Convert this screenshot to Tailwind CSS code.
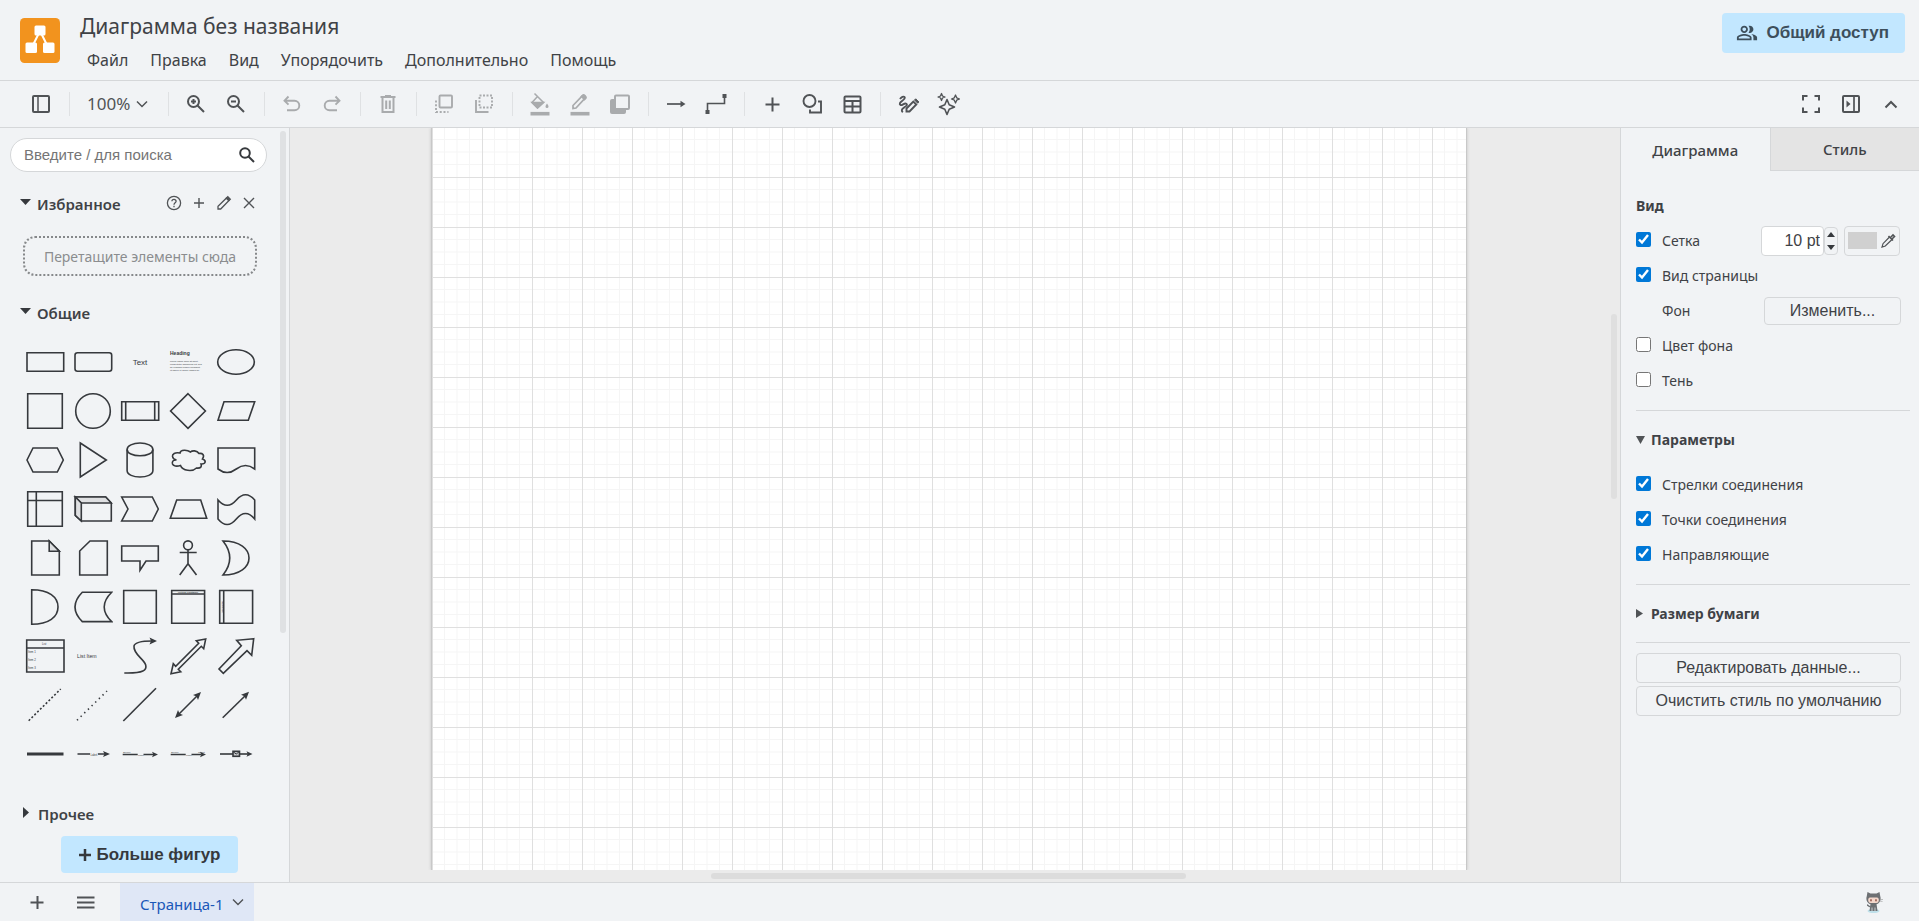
<!DOCTYPE html>
<html lang="ru">
<head>
    <meta charset="UTF-8">
    <meta name="viewport" content="width=device-width, initial-scale=1.0">
    <title>Диаграмма без названия</title>
    <script src="https://cdn.jsdelivr.net/npm/@tailwindcss/browser@4"></script>
</head>
<body class="flex flex-col h-screen overflow-hidden bg-[#f1f3f5] text-[#3f4246] font-['Noto_Sans',sans-serif]">

    <!-- Header: logo, title, menu bar -->
    <header class="flex shrink-0 h-[81px] border-b border-[#d5d7d9] pl-5 pr-[14px]">
        <svg class="w-10 h-[55px] mt-[13px] shrink-0" viewBox="0 0 40 55" aria-hidden="true">
            <rect y="5" width="40" height="45" rx="4.500" fill="#f2931e"/>
            <path d="M20 18 L11 36 M20 18 L29 36" stroke="#fff" stroke-width="2"/>
            <rect x="14.500" y="12.500" width="11" height="10" rx="1.500" fill="#fff"/>
            <rect x="5.500" y="29.500" width="11.500" height="10.500" rx="1.500" fill="#fff"/>
            <rect x="23" y="29.500" width="11.500" height="10.500" rx="1.500" fill="#fff"/>
        </svg>
        <div class="flex-1 pl-5 pt-3">
            <h1 class="text-[21px] leading-7">Диаграмма без названия</h1>
            <nav class="flex gap-[22px] pl-[7px] pt-[6px] text-[16px] leading-7">
                <button type="button">Файл</button>
                <button type="button">Правка</button>
                <button type="button">Вид</button>
                <button type="button">Упорядочить</button>
                <button type="button">Дополнительно</button>
                <button type="button">Помощь</button>
            </nav>
        </div>
        <button type="button" class="flex items-center gap-2 h-10 mt-[13px] pl-[14px] pr-4 rounded bg-[#c2e7ff] text-[#3d4f5c] font-['Liberation_Sans',sans-serif] font-bold text-[17px]">
            <svg class="w-[22px] h-[22px]" viewBox="0 0 24 24" fill="currentColor" aria-hidden="true"><path d="M16.700 13.100c1.400.9 2.300 2.200 2.300 3.900v3h4v-3c0-2.200-3.600-3.500-6.300-3.900zM15 12c2.200 0 4-1.800 4-4s-1.800-4-4-4c-.5 0-.9.1-1.300.2A6 6 0 0 1 15 8a6 6 0 0 1-1.300 3.800c.4.100.8.200 1.300.2zM9 12c2.200 0 4-1.800 4-4s-1.800-4-4-4-4 1.800-4 4 1.800 4 4 4zm0-6c1.100 0 2 .9 2 2s-.9 2-2 2-2-.9-2-2 .9-2 2-2zM9 13c-2.700 0-8 1.300-8 4v3h16v-3c0-2.700-5.300-4-8-4zm6 5H3v-1c0-.6 3-2 6-2s6 1.400 6 2v1z"/></svg>
            Общий доступ
        </button>
    </header>

    <!-- Toolbar -->
    <div class="flex shrink-0 items-center h-[47px] border-b border-[#d5d7d9] pl-[21px] pr-2 text-[#505356]">
        <button type="button" aria-label="Фигуры" class="grid place-items-center w-10 h-10">
            <svg class="w-6 h-6" viewBox="0 0 24 24" fill="none" stroke="currentColor" stroke-width="2"><rect x="4" y="4" width="16" height="16" rx="1"/><path d="M9 4v16" stroke-width="1.500"/></svg>
        </button>
        <span class="w-4 h-6 flex justify-center"><i class="w-px bg-[#dfe1e3]"></i></span>
        <button type="button" class="flex items-center gap-1 w-[83px] pl-[10px] text-[17px]">100%
            <svg class="w-4 h-4" viewBox="0 0 16 16" fill="none" stroke="currentColor" stroke-width="1.500"><path d="M3 5.500l5 5 5-5"/></svg>
        </button>
        <span class="w-4 h-6 flex justify-center"><i class="w-px bg-[#dfe1e3]"></i></span>
        <button type="button" aria-label="Увеличить" class="grid place-items-center w-10 h-10">
            <svg class="w-6 h-6" viewBox="0 0 24 24" fill="none" stroke="currentColor" stroke-width="2"><circle cx="9.500" cy="9.500" r="5.500"/><path d="M13.500 13.500l6.500 6.500M9.500 7v5M7 9.500h5"/></svg>
        </button>
        <button type="button" aria-label="Уменьшить" class="grid place-items-center w-10 h-10">
            <svg class="w-6 h-6" viewBox="0 0 24 24" fill="none" stroke="currentColor" stroke-width="2"><circle cx="9.500" cy="9.500" r="5.500"/><path d="M13.500 13.500l6.500 6.500M7 9.500h5"/></svg>
        </button>
        <span class="w-4 h-6 flex justify-center"><i class="w-px bg-[#dfe1e3]"></i></span>
        <button type="button" aria-label="Отменить" class="grid place-items-center w-10 h-10 text-[#a9abad]">
            <svg class="w-6 h-6" viewBox="0 0 24 24" fill="none" stroke="currentColor" stroke-width="1.900"><path d="M8.500 4.500L4.500 8.700l4 4M4.500 8.700h10a4.800 4.800 0 0 1 0 9.600H7"/></svg>
        </button>
        <button type="button" aria-label="Повторить" class="grid place-items-center w-10 h-10 text-[#a9abad]">
            <svg class="w-6 h-6" viewBox="0 0 24 24" fill="none" stroke="currentColor" stroke-width="1.900"><path d="M15.500 4.500l4 4.200-4 4M19.500 8.700h-10a4.800 4.800 0 0 0 0 9.600H17"/></svg>
        </button>
        <span class="w-4 h-6 flex justify-center"><i class="w-px bg-[#dfe1e3]"></i></span>
        <button type="button" aria-label="Удалить" class="grid place-items-center w-10 h-10 text-[#a9abad]">
            <svg class="w-6 h-6" viewBox="0 0 24 24" fill="none" stroke="currentColor" stroke-width="2"><path d="M4.500 5h15M9 4h6M6.500 5v15h11V5M10.200 8.500v8.500M13.800 8.500v8.500"/></svg>
        </button>
        <span class="w-4 h-6 flex justify-center"><i class="w-px bg-[#dfe1e3]"></i></span>
        <button type="button" aria-label="На передний план" class="grid place-items-center w-10 h-10 text-[#a9abad]">
            <svg class="w-6 h-6" viewBox="0 0 24 24" fill="none" stroke="currentColor" stroke-width="1.900"><rect x="7.500" y="3.500" width="12.500" height="12" rx="1"/><path d="M4 8.500v11.500h12.500" stroke-dasharray="2 1.800"/></svg>
        </button>
        <button type="button" aria-label="На задний план" class="grid place-items-center w-10 h-10 text-[#a9abad]">
            <svg class="w-6 h-6" viewBox="0 0 24 24" fill="none" stroke="currentColor" stroke-width="1.900"><rect x="7.500" y="3.500" width="12.500" height="12" stroke-dasharray="2 1.500"/><path d="M4 8v12h12.500"/></svg>
        </button>
        <span class="w-4 h-6 flex justify-center"><i class="w-px bg-[#dfe1e3]"></i></span>
        <button type="button" aria-label="Заливка" class="grid place-items-center w-10 h-10 text-[#a9abad]">
            <svg class="w-6 h-6" viewBox="0 0 24 24" fill="none" stroke="currentColor" stroke-width="1.500"><path d="M6.500 1.500l9 9-6 5.500L4 10.500l5.500-6"/><path d="M4 10.500h11.500L9.500 16z" fill="currentColor"/><path d="M19 11.500c1 1.500 1.500 2.200 1.500 3a1.500 1.500 0 0 1-3 0c0-.8.500-1.500 1.500-3z" fill="currentColor" stroke="none"/><path d="M2.500 21.700h19" stroke-width="3.600"/></svg>
        </button>
        <button type="button" aria-label="Цвет линии" class="grid place-items-center w-10 h-10 text-[#a9abad]">
            <svg class="w-6 h-6" viewBox="0 0 24 24" fill="none" stroke="currentColor" stroke-width="1.700"><path d="M5 16.500v-3l9.500-9.800c1-.9 3.500 1.400 2.600 2.500L8 16z"/><path d="M13.500 4.500l3 3 1.500-1.500c.6-.8-2-3.700-3-2.900z" fill="currentColor"/><path d="M2.500 21.700h19" stroke-width="3.600"/></svg>
        </button>
        <button type="button" aria-label="Тень" class="grid place-items-center w-10 h-10 text-[#a9abad]">
            <svg class="w-6 h-6" viewBox="0 0 24 24"><rect x="2" y="7" width="16" height="15" rx="2" fill="currentColor"/><rect x="7" y="3.500" width="14" height="13.500" rx="1" fill="#f1f3f5" stroke="currentColor" stroke-width="2"/></svg>
        </button>
        <span class="w-4 h-6 flex justify-center"><i class="w-px bg-[#dfe1e3]"></i></span>
        <button type="button" aria-label="Соединение" class="grid place-items-center w-10 h-10">
            <svg class="w-6 h-6" viewBox="0 0 24 24"><path d="M3 12h14" stroke="currentColor" stroke-width="1.700"/><path d="M16.500 8.800l5 3.200-5 3.200z" fill="currentColor"/></svg>
        </button>
        <button type="button" aria-label="Точки пути" class="grid place-items-center w-10 h-10">
            <svg class="w-6 h-6" viewBox="0 0 24 24"><path d="M3.500 20v-8.500h17V4" fill="none" stroke="currentColor" stroke-width="1.600"/><path d="M1.500 18h4v4h-4zM18.500 2h4v4h-4z" fill="currentColor"/></svg>
        </button>
        <span class="w-4 h-6 flex justify-center"><i class="w-px bg-[#dfe1e3]"></i></span>
        <button type="button" aria-label="Вставить" class="grid place-items-center w-10 h-10">
            <svg class="w-6 h-6" viewBox="0 0 24 24"><path d="M5.500 12.500h14M12.500 5.500v14" stroke="currentColor" stroke-width="2"/></svg>
        </button>
        <button type="button" aria-label="Фигура" class="grid place-items-center w-10 h-10">
            <svg class="w-6 h-6" viewBox="0 0 24 24" fill="none" stroke="currentColor" stroke-width="1.900"><circle cx="9.500" cy="9" r="6"/><path d="M18 9.500h3v11H10v-3"/></svg>
        </button>
        <button type="button" aria-label="Таблица" class="grid place-items-center w-10 h-10">
            <svg class="w-6 h-6" viewBox="0 0 24 24" fill="none" stroke="currentColor" stroke-width="2"><rect x="4.500" y="4.500" width="16" height="16" rx="1"/><path d="M4.500 9h16M4.500 14.500h16M12.500 9v11.500"/></svg>
        </button>
        <span class="w-4 h-6 flex justify-center"><i class="w-px bg-[#dfe1e3]"></i></span>
        <button type="button" aria-label="Рисование" class="grid place-items-center w-10 h-10">
            <svg class="w-6 h-6" viewBox="0 0 24 24" fill="none" stroke="currentColor" stroke-width="1.900"><path d="M4 7c1.500-2 3.500-3 4.500-2S8 7.500 6 9s-3 3-1.500 4 4-2.500 5.800-1.200-.8 2.700-2.800 4.200-2.200 2.800-.7 4.200"/><path d="M10.500 19.500v-3l6.800-7 3 3-6.800 7z"/><path d="M18.500 8l1.200-1.200 3.200 3.200-1.200 1.200z" fill="currentColor" stroke-width="1"/></svg>
        </button>
        <button type="button" aria-label="Создать" class="grid place-items-center w-10 h-10">
            <svg class="w-6 h-6" viewBox="0 0 24 24" fill="none" stroke="currentColor" stroke-width="1.600" stroke-linejoin="round"><path d="M11 7.500l2.200 5.300 5.300 2.200-5.300 2.200-2.200 5.300-2.200-5.300L3.500 15l5.300-2.200z"/><path d="M5.500 1.500l1 2.500L9 5 6.500 6l-1 2.500-1-2.500L2 5l2.500-1zM19.500 3l1.200 2.800 2.800 1.200-2.800 1.200-1.200 2.800-1.200-2.800-2.800-1.200 2.800-1.200z" stroke-width="1.300"/></svg>
        </button>
        <div class="flex ml-auto">
            <button type="button" aria-label="Полный экран" class="grid place-items-center w-10 h-10">
                <svg class="w-6 h-6" viewBox="0 0 24 24" fill="none" stroke="currentColor" stroke-width="2"><path d="M4 8.500V4h4.500M15.500 4H20v4.500M20 15.500V20h-4.500M8.500 20H4v-4.500"/></svg>
            </button>
            <button type="button" aria-label="Формат" class="grid place-items-center w-10 h-10">
                <svg class="w-6 h-6" viewBox="0 0 24 24" fill="none" stroke="currentColor" stroke-width="2"><rect x="4" y="4" width="16" height="16" rx="1"/><path d="M15 4v16" stroke-width="1.700"/><path d="M7.500 8.500l4 3.500-4 3.500z" fill="currentColor" stroke="none"/></svg>
            </button>
            <button type="button" aria-label="Свернуть" class="grid place-items-center w-10 h-10">
                <svg class="w-6 h-6" viewBox="0 0 24 24" fill="none" stroke="currentColor" stroke-width="2"><path d="M6.500 15.500l5.500-5.500 5.500 5.500"/></svg>
            </button>
        </div>
    </div>

    <div class="flex flex-1 min-h-0">
        <!-- Shape library -->
        <aside class="flex w-[290px] shrink-0 border-r border-[#d5d7d9]">
            <div class="flex flex-col flex-1 min-w-0 pt-[10px]">
                <div class="flex items-center h-[34px] ml-[10px] mr-[13px] pl-[13px] pr-[10px] rounded-full border border-[#d5d7d9] bg-white">
                    <input type="text" aria-label="Поиск фигур" placeholder="Введите / для поиска" class="flex-1 min-w-0 outline-none font-['Liberation_Sans',sans-serif] text-[15px] placeholder:text-[#757575]">
                    <svg class="w-[18px] h-[18px]" viewBox="0 0 18 18" fill="none" stroke="#36393d" stroke-width="2"><circle cx="7" cy="7" r="4.800"/><path d="M10.500 10.500L16 16"/></svg>
                </div>

                <div class="flex items-center h-10 mt-3 pl-5 pr-[23px]">
                    <svg class="w-[11px] h-[6px] mb-1" viewBox="0 0 11 6"><path d="M0 0h11L5.500 6z" fill="#36393d"/></svg>
                    <h2 class="flex-1 pl-[6px] text-[15px] font-semibold">Избранное</h2>
                    <div class="flex gap-[9px] pb-[2px] text-[#505356]">
                        <button type="button" aria-label="Справка"><svg class="w-4 h-4" viewBox="0 0 16 16" fill="none" stroke="currentColor" stroke-width="1.300"><circle cx="8" cy="8" r="6.600"/><path d="M5.900 6.300c.1-2.600 4.300-2.500 4.200 0 0 1.500-2.100 1.600-2.100 3.400M8 10.700v1.500"/></svg></button>
                        <button type="button" aria-label="Добавить"><svg class="w-4 h-4" viewBox="0 0 16 16" stroke="currentColor" stroke-width="1.400"><path d="M3 8h10M8 3v10"/></svg></button>
                        <button type="button" aria-label="Правка"><svg class="w-4 h-4" viewBox="0 0 16 16" fill="none" stroke="currentColor" stroke-width="1.300"><path d="M2 14v-2.700L10.500 3l2.500 2.500L4.700 14z"/><path d="M10.300 3.200l1.500-1.500 2.500 2.500-1.500 1.500z" fill="currentColor"/></svg></button>
                        <button type="button" aria-label="Закрыть"><svg class="w-4 h-4" viewBox="0 0 16 16" stroke="currentColor" stroke-width="1.400"><path d="M3 3l10 10M13 3L3 13"/></svg></button>
                    </div>
                </div>
                <div class="flex items-center justify-center h-10 mt-[12px] ml-[23px] mr-[23px] rounded-xl border-2 border-dotted border-[#86888a] text-[14px] text-[#8b8d8f]">Перетащите элементы сюда</div>

                <div class="flex items-center h-10 mt-[17px] pl-5">
                    <svg class="w-[11px] h-[6px] mb-1" viewBox="0 0 11 6"><path d="M0 0h11L5.500 6z" fill="#36393d"/></svg>
                    <h2 class="pl-[6px] text-[15px] font-semibold">Общие</h2>
                </div>

                <div class="grid grid-cols-5 auto-rows-[49px] place-items-center mt-[4px] pl-[21px] pr-[20px] fill-none stroke-[#36393d] stroke-[1.6] font-['Liberation_Sans',sans-serif]">
                    <svg class="w-10 h-10" viewBox="0 0 40 40"><path d="M2 10.700h36.700v18.600H2z"/></svg>
                    <svg class="w-10 h-10" viewBox="0 0 40 40"><rect x="2" y="10.700" width="36.700" height="18.600" rx="2.500"/></svg>
                    <svg class="w-10 h-10" viewBox="0 0 40 40"><text x="20" y="22.700" font-size="8" text-anchor="middle" class="fill-[#36393d] stroke-none">Text</text></svg>
                    <svg class="w-10 h-10 fill-[#36393d] stroke-none" viewBox="0 0 40 40"><text x="2" y="13" font-size="5" font-weight="bold">Heading</text><text font-size="2.300"><tspan x="2" y="20">Lorem ipsum dolor sit amet,</tspan><tspan x="2" y="23">consectetur adipisicing elit, sed</tspan><tspan x="2" y="26">do eiusmod tempor incididunt</tspan><tspan x="2" y="29">ut labore et dolore magna ali.</tspan></text></svg>
                    <svg class="w-10 h-10" viewBox="0 0 40 40"><ellipse cx="20" cy="20" rx="18.300" ry="12.300"/></svg>

                    <svg class="w-10 h-10" viewBox="0 0 40 40"><path d="M2.700 2.700h34.600v34.600H2.700z"/></svg>
                    <svg class="w-10 h-10" viewBox="0 0 40 40"><circle cx="20" cy="20" r="17.300"/></svg>
                    <svg class="w-10 h-10" viewBox="0 0 40 40"><path d="M1.700 10.700h37v18.600h-37zM5.700 10.700v18.600M34.700 10.700v18.600"/></svg>
                    <svg class="w-10 h-10" viewBox="0 0 40 40"><path d="M20 2.700L37.400 20 20 37.300 2.600 20z"/></svg>
                    <svg class="w-10 h-10" viewBox="0 0 40 40"><path d="M8 10.700h30.700l-6.400 18.600H2z"/></svg>

                    <svg class="w-10 h-10" viewBox="0 0 40 40"><path d="M2 20L8 8h24.300l6 12-6 12H8z"/></svg>
                    <svg class="w-10 h-10" viewBox="0 0 40 40"><path d="M7.300 3l26 17-26 17z"/></svg>
                    <svg class="w-10 h-10" viewBox="0 0 40 40"><ellipse cx="20" cy="9.400" rx="12.900" ry="6.400"/><path d="M7.100 9.400v21.200c0 8.500 25.800 8.500 25.800 0V9.400"/></svg>
                    <svg class="w-10 h-10" viewBox="0 0 40 40"><path d="M12 13C7 12 4 14 4.500 16.500c.3 2 1.500 3 4 3.500-4-.3-4.500 2-4 4 .6 2 4 2.700 8 1.500 2 5.500 12 6.500 16 2.500 4.500.5 5.500-1.500 4.500-4 5 .3 5.500-3.500 1.500-5 2.500-4 0-6-3.500-5.500C29 10 24 10.500 22.500 12 19 9.500 12.500 9.500 12 13z"/></svg>
                    <svg class="w-10 h-10" viewBox="0 0 40 40"><path d="M2 8h36.700v21q-9.200-7-18.400 0T2 29z"/></svg>

                    <svg class="w-10 h-10" viewBox="0 0 40 40"><path d="M2.700 2.700h34.600v34.600H2.700zM11.300 2.700v34.600M2.700 11.500h34.600"/></svg>
                    <svg class="w-10 h-10" viewBox="0 0 40 40"><path d="M2.300 8h30.400l5.600 6v18h-30l-6-5.700z"/><path d="M2.300 8h30.400l5.600 6h-30z" fill="#dfe0e2"/><path d="M2.300 8l6 6v18l-6-5.700z" fill="#dfe0e2"/></svg>
                    <svg class="w-10 h-10" viewBox="0 0 40 40"><path d="M1.700 8h30.600l6 12-6 12H1.700L8 20z"/></svg>
                    <svg class="w-10 h-10" viewBox="0 0 40 40"><path d="M8.700 11h24l6 18.300H2.300z"/></svg>
                    <svg class="w-10 h-10" viewBox="0 0 40 40"><path d="M2 11q9.200 10.500 18.400 0t18.300 0v19q-9.200-11-18.400 0T2 30z"/></svg>

                    <svg class="w-10 h-10" viewBox="0 0 40 40"><path d="M6.700 3h17.500l10.100 10.200V37H6.700z"/><path d="M24.200 3v10.200h10.100z" fill="#dfe0e2"/></svg>
                    <svg class="w-10 h-10" viewBox="0 0 40 40"><path d="M17 3h17.300v34H6.700V13z"/></svg>
                    <svg class="w-10 h-10" viewBox="0 0 40 40"><path d="M1.700 8h36.600v15H26l-6 9.300V23H1.700z"/></svg>
                    <svg class="w-10 h-10" viewBox="0 0 40 40"><circle cx="20" cy="7.300" r="4.400"/><path d="M20 11.700v14L11.700 37M20 25.700L28.500 37M11.700 14.500h17"/></svg>
                    <svg class="w-10 h-10" viewBox="0 0 40 40"><path d="M7 3c17 0 26 8 26 17S24 37 7 37q13.500-17 0-34z"/></svg>

                    <svg class="w-10 h-10" viewBox="0 0 40 40"><path d="M6.700 2.700C24 2.700 33 10 33 20S24 37.300 6.700 37.300z"/></svg>
                    <svg class="w-10 h-10" viewBox="0 0 40 40"><path d="M9.300 5.200h29.400q-15 14.700 0 29.400H9.300q-14.600-14.700 0-29.400z"/></svg>
                    <svg class="w-10 h-10" viewBox="0 0 40 40"><path d="M3.700 3.500h32.600v32.800H3.700z"/></svg>
                    <svg class="w-10 h-10" viewBox="0 0 40 40"><path d="M3.700 3.500h32.900v32.800H3.700zM3.700 7h32.900"/><text x="20" y="6.300" font-size="2.400" font-weight="bold" text-anchor="middle" class="fill-[#36393d] stroke-none">Vertical Container</text></svg>
                    <svg class="w-10 h-10" viewBox="0 0 40 40"><path d="M3.700 3.500h32.900v32.800H3.700zM7.700 3.500v32.800"/><text x="-20" y="6.500" font-size="2.300" font-weight="bold" text-anchor="middle" transform="rotate(-90)" class="fill-[#36393d] stroke-none">Horizontal</text></svg>

                    <svg class="w-10 h-10" viewBox="0 0 40 40"><path d="M1.700 4H39v32H1.700zM1.700 12H39"/><g font-size="2.800" class="fill-[#36393d] stroke-none"><text x="17" y="9">List</text><text x="3" y="17">Item 1</text><text x="3" y="25">Item 2</text><text x="3" y="33">Item 3</text></g></svg>
                    <svg class="w-10 h-10" viewBox="0 0 40 40"><text x="4" y="21.500" font-size="5.200" class="fill-[#36393d] stroke-none">List Item</text></svg>
                    <svg class="w-10 h-10" viewBox="0 0 40 40"><path d="M4.300 37C24 37.500 27 34 25.700 29 24 23 13 18 14 10c1-4 8-5 18-5"/><path d="M37 5l-7.500-3.500L31 5l-1.500 3.500z" class="fill-[#36393d] stroke-none"/></svg>
                    <svg class="w-10 h-10" viewBox="0 0 40 40"><path d="M37.700 3l-9.400 1.700 2.400 2.600-23 23-2.400-2.600L3 37.700l9.700-2-2.400-2.400 23-23 2.400 2.400z"/></svg>
                    <svg class="w-10 h-10" viewBox="0 0 40 40"><path d="M37.700 2.700l-17 1.600 4.600 5.400L3 33l4.300 4.300L31 14.700l4.700 4.600z"/></svg>

                    <svg class="w-10 h-10" viewBox="0 0 40 40"><path d="M3.700 35.700L35.700 4" stroke-dasharray="2 2"/></svg>
                    <svg class="w-10 h-10" viewBox="0 0 40 40"><path d="M4 35.300L34 6" stroke-dasharray="1.400 3.700"/></svg>
                    <svg class="w-10 h-10" viewBox="0 0 40 40"><path d="M3.300 36L36 3.300"/></svg>
                    <svg class="w-10 h-10" viewBox="0 0 40 40"><path d="M9 31L31 9"/><path d="M33 7l-8 3 3.500 1.500L30 15zM7 33l3-8 1.500 3.500L15 30z" class="fill-[#36393d] stroke-none"/></svg>
                    <svg class="w-10 h-10" viewBox="0 0 40 40"><path d="M6.700 32.700L31 9"/><path d="M33 6.700l-8 3 3.500 1.500 1.500 3.500z" class="fill-[#36393d] stroke-none"/></svg>

                    <svg class="w-10 h-10" viewBox="0 0 40 40"><path d="M2 20h36.500" class="stroke-[3]"/></svg>
                    <svg class="w-10 h-10" viewBox="0 0 40 40"><path d="M4.500 20H17M25 20h8"/><path d="M37 20l-7-3 1.500 3-1.500 3z" class="fill-[#36393d] stroke-none"/><text x="17.500" y="21.700" font-size="2.800" class="fill-[#36393d] stroke-none">Label</text></svg>
                    <svg class="w-10 h-10" viewBox="0 0 40 40"><path d="M2.700 20.500h15M23.500 20.500h11"/><path d="M38 20.500l-6-2.700 1.300 2.700-1.300 2.700z" class="fill-[#36393d] stroke-none"/><g font-size="2.400" class="fill-[#36393d] stroke-none"><text x="3" y="19">Source</text><text x="18" y="21.800">Label</text></g></svg>
                    <svg class="w-10 h-10" viewBox="0 0 40 40"><path d="M2.700 20.500h15M23.500 20.500h10"/><path d="M38 20.500l-6-2.700 1.300 2.700-1.300 2.700z" class="fill-[#36393d] stroke-none"/><g font-size="2.400" class="fill-[#36393d] stroke-none"><text x="3" y="19">Source</text><text x="18" y="21.800">Label</text><text x="30" y="18.500">Target</text></g></svg>
                    <svg class="w-10 h-10" viewBox="0 0 40 40"><path d="M4 20h30"/><path d="M36.500 20l-6-2.800 1.300 2.800-1.300 2.800z" class="fill-[#36393d] stroke-none"/><rect x="17" y="17.300" width="6.500" height="5" fill="#c9cacc"/><path d="M17.500 18l2.700 2 2.700-2" class="stroke-1"/></svg>
                </div>

                <div class="flex items-center h-10 mt-auto pl-[23px]">
                    <svg class="w-[6px] h-[11px] mb-1" viewBox="0 0 6 11"><path d="M0 0v11l6-5.500z" fill="#36393d"/></svg>
                    <h2 class="pl-[9px] text-[15px] font-semibold">Прочее</h2>
                </div>
                <button type="button" class="flex items-center justify-center gap-1.5 self-center h-[37px] w-[177px] ml-[19px] mb-[9px] mt-[2px] rounded bg-[#c2e7ff] font-['Liberation_Sans',sans-serif] text-[17px] font-bold text-[#36393d]">
                    <svg class="w-3 h-3" viewBox="0 0 12 12" stroke="currentColor" stroke-width="2.500"><path d="M0 6h12M6 0v12"/></svg>
                    Больше фигур
                </button>
            </div>
            <div class="w-[9px] pt-[3px] shrink-0"><div class="w-[6px] h-[502px] rounded-sm bg-[#dfe1e3]"></div></div>
        </aside>

        <!-- Drawing area -->
        <main class="flex flex-1 min-w-0 flex-col bg-[#ebebeb]">
            <div class="flex flex-1 min-h-0">
                <div class="flex flex-1 min-w-0 justify-center overflow-hidden">
                    <div class="w-[1036px] h-full bg-white border-l border-r border-[#c8c8c8] shadow-[0_0_3px_#c4c4c4]">
                        <svg class="w-full h-full" aria-hidden="true">
                            <defs>
                                <pattern id="grid" width="50" height="50" patternUnits="userSpaceOnUse">
                                    <path d="M12.500 0v50M25 0v50M37.500 0v50M0 11.500h50M0 24h50M0 36.500h50" stroke="#f5f5f5" fill="none"/>
                                    <path d="M.5 0v50M0 49.500h50" stroke="#dfdfdf" fill="none"/>
                                </pattern>
                            </defs>
                            <rect width="100%" height="100%" fill="url(#grid)"/>
                        </svg>
                    </div>
                </div>
                <div class="flex items-center w-3 shrink-0"><div class="w-[6px] h-[185px] mb-[186px] ml-[3px] rounded-sm bg-[#dfdfdf]"></div></div>
            </div>
            <div class="flex justify-center h-3 pt-[3px] pr-[14px]"><div class="w-[475px] h-[6px] rounded-sm bg-[#dcdcdc]"></div></div>
        </main>

        <!-- Format panel -->
        <aside class="flex flex-col w-[299px] shrink-0 border-l border-[#d5d7d9]">
            <div class="flex h-[43px] text-[15px] font-medium">
                <button type="button" class="flex-1 pt-[2px]">Диаграмма</button>
                <button type="button" class="flex-1 border-l border-b border-[#d5d7d9] bg-[#e4e4e4]">Стиль</button>
            </div>
            <form class="flex flex-col pl-[15px] pr-[9px] pt-[17px] text-[14px]">
                <h3 class="flex items-center h-[35px] font-bold">Вид</h3>
                <div class="flex items-center h-[35px] mr-[10px]">
                    <input id="grid-on" type="checkbox" checked class="w-[15px] h-[15px] mb-[2px] accent-[#0078d7]">
                    <label for="grid-on" class="flex-1 pl-[11px]">Сетка</label>
                    <input type="text" value="10 pt" aria-label="Размер сетки" class="w-[63px] h-[30px] pr-[3px] rounded border border-[#d5d7d9] bg-white text-right font-['Liberation_Sans',sans-serif] text-[16px] leading-7">
                    <div class="flex flex-col justify-between w-[14px] h-[28px] py-1 rounded border border-[#d5d7d9]">
                        <button type="button" aria-label="Больше" class="flex justify-center"><svg class="w-2 h-[5px]" viewBox="0 0 8 5"><path d="M0 5h8L4 0z" fill="#36393d"/></svg></button>
                        <button type="button" aria-label="Меньше" class="flex justify-center"><svg class="w-2 h-[5px]" viewBox="0 0 8 5"><path d="M0 0h8L4 5z" fill="#36393d"/></svg></button>
                    </div>
                    <button type="button" aria-label="Цвет сетки" class="flex items-center justify-between w-14 h-[30px] ml-[6px] px-[3px] rounded border border-[#d5d7d9]">
                        <span class="w-[29px] h-[17px] bg-[#d0d0d0]"></span>
                        <svg class="w-[15px] h-[15px]" viewBox="0 0 15 15" fill="none" stroke="#505356" stroke-width="1.200"><path d="M8.500 4L2 10.700 1 14l3.300-1L11 6.500"/><path d="M7.500 3l4.500 4.500M9.500 4.500L12 2l1.500 1.500L11 6" stroke-width="1.600"/></svg>
                    </button>
                </div>
                <div class="flex items-center h-[35px]">
                    <input id="page-view" type="checkbox" checked class="w-[15px] h-[15px] mb-[2px] accent-[#0078d7]">
                    <label for="page-view" class="pl-[11px]">Вид страницы</label>
                </div>
                <div class="flex items-center justify-between h-[35px] mr-[9px] pl-[26px]">
                    <span>Фон</span>
                    <button type="button" class="w-[137px] h-[28px] rounded border border-[#d5d7d9] font-['Liberation_Sans',sans-serif] text-[16px] leading-6">Изменить...</button>
                </div>
                <div class="flex items-center h-[35px]">
                    <input id="bg-color" type="checkbox" class="w-[15px] h-[15px] mb-[2px]">
                    <label for="bg-color" class="pl-[11px]">Цвет фона</label>
                </div>
                <div class="flex items-center h-[35px]">
                    <input id="shadow" type="checkbox" class="w-[15px] h-[15px] mb-[2px]">
                    <label for="shadow" class="pl-[11px]">Тень</label>
                </div>

                <hr class="mt-3 border-[#d5d7d9]">
                <h3 class="flex items-center gap-[6px] h-[35px] mt-[11px] font-bold">
                    <svg class="w-[9px] h-[8px]" viewBox="0 0 9 8"><path d="M0 0h9L4.500 8z" fill="#505356"/></svg>
                    Параметры
                </h3>
                <div class="flex items-center h-[35px] mt-[10px]">
                    <input id="arrows" type="checkbox" checked class="w-[15px] h-[15px] mb-[2px] accent-[#0078d7]">
                    <label for="arrows" class="pl-[11px]">Стрелки соединения</label>
                </div>
                <div class="flex items-center h-[35px]">
                    <input id="points" type="checkbox" checked class="w-[15px] h-[15px] mb-[2px] accent-[#0078d7]">
                    <label for="points" class="pl-[11px]">Точки соединения</label>
                </div>
                <div class="flex items-center h-[35px]">
                    <input id="guides" type="checkbox" checked class="w-[15px] h-[15px] mb-[2px] accent-[#0078d7]">
                    <label for="guides" class="pl-[11px]">Направляющие</label>
                </div>

                <hr class="mt-3 border-[#d5d7d9]">
                <h3 class="flex items-center gap-[7px] h-[35px] mt-[11px] font-bold">
                    <svg class="w-2 h-[9px]" viewBox="0 0 8 9"><path d="M0 0v9l7-4.500z" fill="#505356"/></svg>
                    Размер бумаги
                </h3>
                <hr class="mt-[11px] border-[#d5d7d9]">
                <div class="flex flex-col gap-[3px] mt-[10px] mr-[9px] font-['Liberation_Sans',sans-serif] text-[16px] leading-6">
                    <button type="button" class="h-[30px] rounded border border-[#d5d7d9] whitespace-nowrap">Редактировать данные...</button>
                    <button type="button" class="h-[30px] rounded border border-[#d5d7d9] whitespace-nowrap">Очистить стиль по умолчанию</button>
                </div>
            </form>
        </aside>
    </div>

    <!-- Page tabs -->
    <footer class="flex shrink-0 items-center h-[39px] border-t border-[#d5d7d9] pl-[25px] pr-[33px] text-[#505356]">
        <button type="button" aria-label="Вставить страницу"><svg class="w-6 h-6" viewBox="0 0 24 24" stroke="currentColor" stroke-width="2"><path d="M5.500 12.500h13M12.500 6v13"/></svg></button>
        <button type="button" aria-label="Страницы" class="ml-6"><svg class="w-6 h-6" viewBox="0 0 24 24" stroke="currentColor" stroke-width="2"><path d="M4 7.500h17.500M4 12.500h17.500M4 17.500h17.500"/></svg></button>
        <button type="button" class="flex items-center gap-[6px] h-full ml-[23px] pl-5 pr-2 bg-[#dfe7f6] text-[15px] text-[#1a57b8]">
            <span class="pt-1">Страница-1</span>
            <svg class="w-4 h-4" viewBox="0 0 16 16" fill="none" stroke="#505356" stroke-width="1.400"><path d="M3 5.500l5 5 5-5"/></svg>
        </button>
        <a href="#" aria-label="GitHub" class="ml-auto">
            <svg class="w-6 h-6" viewBox="0 0 24 24">
                <ellipse cx="11.500" cy="21" rx="6" ry="2" fill="#bfe0ea"/>
                <path d="M8.500 14h6l1 7h-8z" fill="#6d7073"/>
                <path d="M8.500 16.500c-2 .5-2-1.500-3.500-1.500" stroke="#6d7073" stroke-width="1.300" fill="none"/>
                <path d="M5.500 2l3 1.500h6L17.500 2l.7 4c1 2.500.3 6-2 7.500-2 1.300-7.400 1.300-9.400 0-2.300-1.500-3-5-2-7.500z" fill="#6d7073"/>
                <path d="M18 9.500h3M17.500 11l3 .5" stroke="#a0a2a4" stroke-width=".7"/>
                <path d="M8 7.500h7c2.500 0 2.500 5.500-.5 5.500h-6C5.500 13 5.500 7.500 8 7.500z" fill="#f3d7cb"/>
                <ellipse cx="9" cy="10.200" rx=".9" ry="1.300" fill="#a0685c"/><ellipse cx="14" cy="10.200" rx=".9" ry="1.300" fill="#a0685c"/>
                <path d="M10 17.500v3.500M13 17.500v3.500" stroke="#f1f3f5" stroke-width=".7"/>
            </svg>
        </a>
    </footer>
</body>
</html>
